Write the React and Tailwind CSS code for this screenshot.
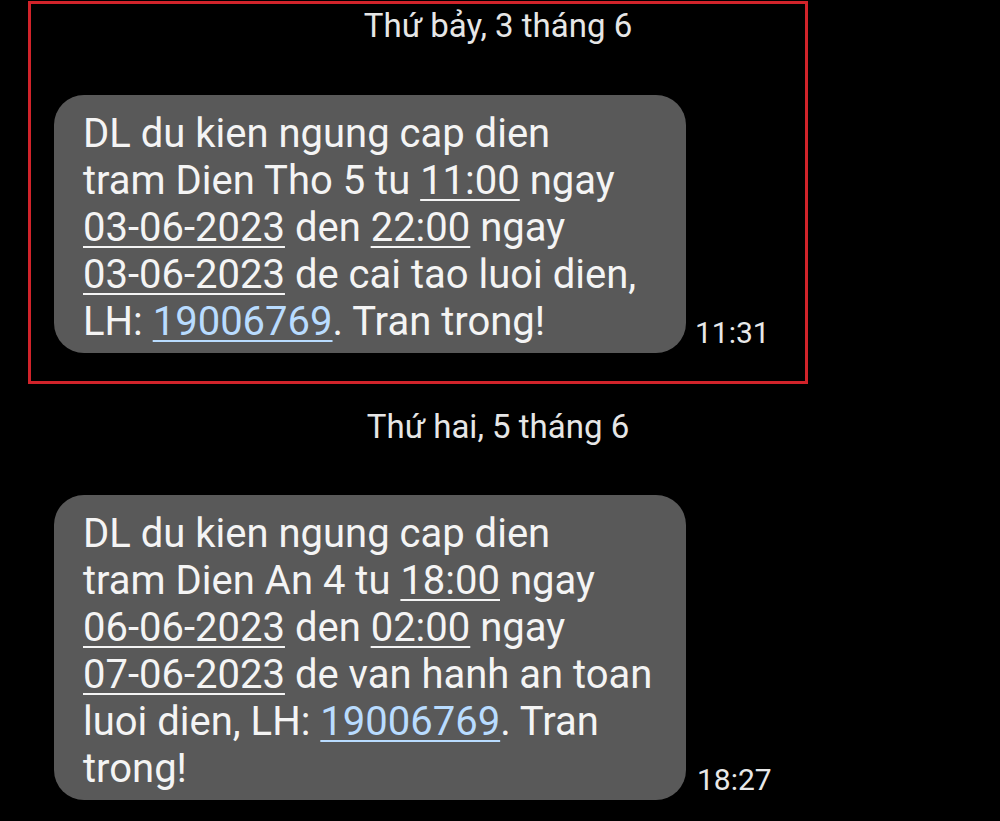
import React from 'react';

const U = ({ children }) => (
  <span className="underline decoration-2 underline-offset-[5px]">{children}</span>
);

const Phone = ({ children }) => (
  <span className="text-[#b9dcff] underline decoration-2 underline-offset-[5px]">{children}</span>
);

const Bubble = ({ time, children, gap }) => (
  <div className="flex items-end ml-[23px]">
    <div className="w-[632px] bg-[#595959] rounded-[30px] pl-[29px] pr-4 pt-[15px] pb-[8px] text-[40px] leading-[47px] text-[#f4f4f4] whitespace-nowrap">
      {children}
    </div>
    <div className={`${gap} mb-[5px] text-[30px] leading-[30px] text-[#e8e8e8]`}>{time}</div>
  </div>
);

const App = () => {
  return (
    <div className="w-[1000px] h-[821px] bg-black overflow-hidden font-['Roboto','Liberation_Sans',sans-serif]">
      {/* highlighted message */}
      <div className="mt-[1px] ml-[28px] w-[780px] border-[3px] border-[#d1232a] pb-[28px]">
        <div className="mt-[4px] -ml-[31px] w-[996px] text-center text-[33px] leading-[36px] text-[#e6e6e6]">
          Thứ bảy, 3 tháng 6
        </div>
        <div className="mt-[51px]">
          <Bubble time="11:31" gap="ml-[9px]">
            DL du kien ngung cap dien<br />
            tram Dien Tho 5 tu <U>11:00</U> ngay<br />
            <U>03-06-2023</U> den <U>22:00</U> ngay<br />
            <U>03-06-2023</U> de cai tao luoi dien,<br />
            LH: <Phone>19006769</Phone>. Tran trong!
          </Bubble>
        </div>
      </div>

      <div className="mt-[25px] w-[996px] text-center text-[33px] leading-[36px] text-[#e6e6e6]">
        Thứ hai, 5 tháng 6
      </div>
      <div className="mt-[50px] ml-[31px]">
        <Bubble time="18:27" gap="ml-[11px]">
          DL du kien ngung cap dien<br />
          tram Dien An 4 tu <U>18:00</U> ngay<br />
          <U>06-06-2023</U> den <U>02:00</U> ngay<br />
          <U>07-06-2023</U> de van hanh an toan<br />
          luoi dien, LH: <Phone>19006769</Phone>. Tran<br />
          trong!
        </Bubble>
      </div>
    </div>
  );
};

export default App;
